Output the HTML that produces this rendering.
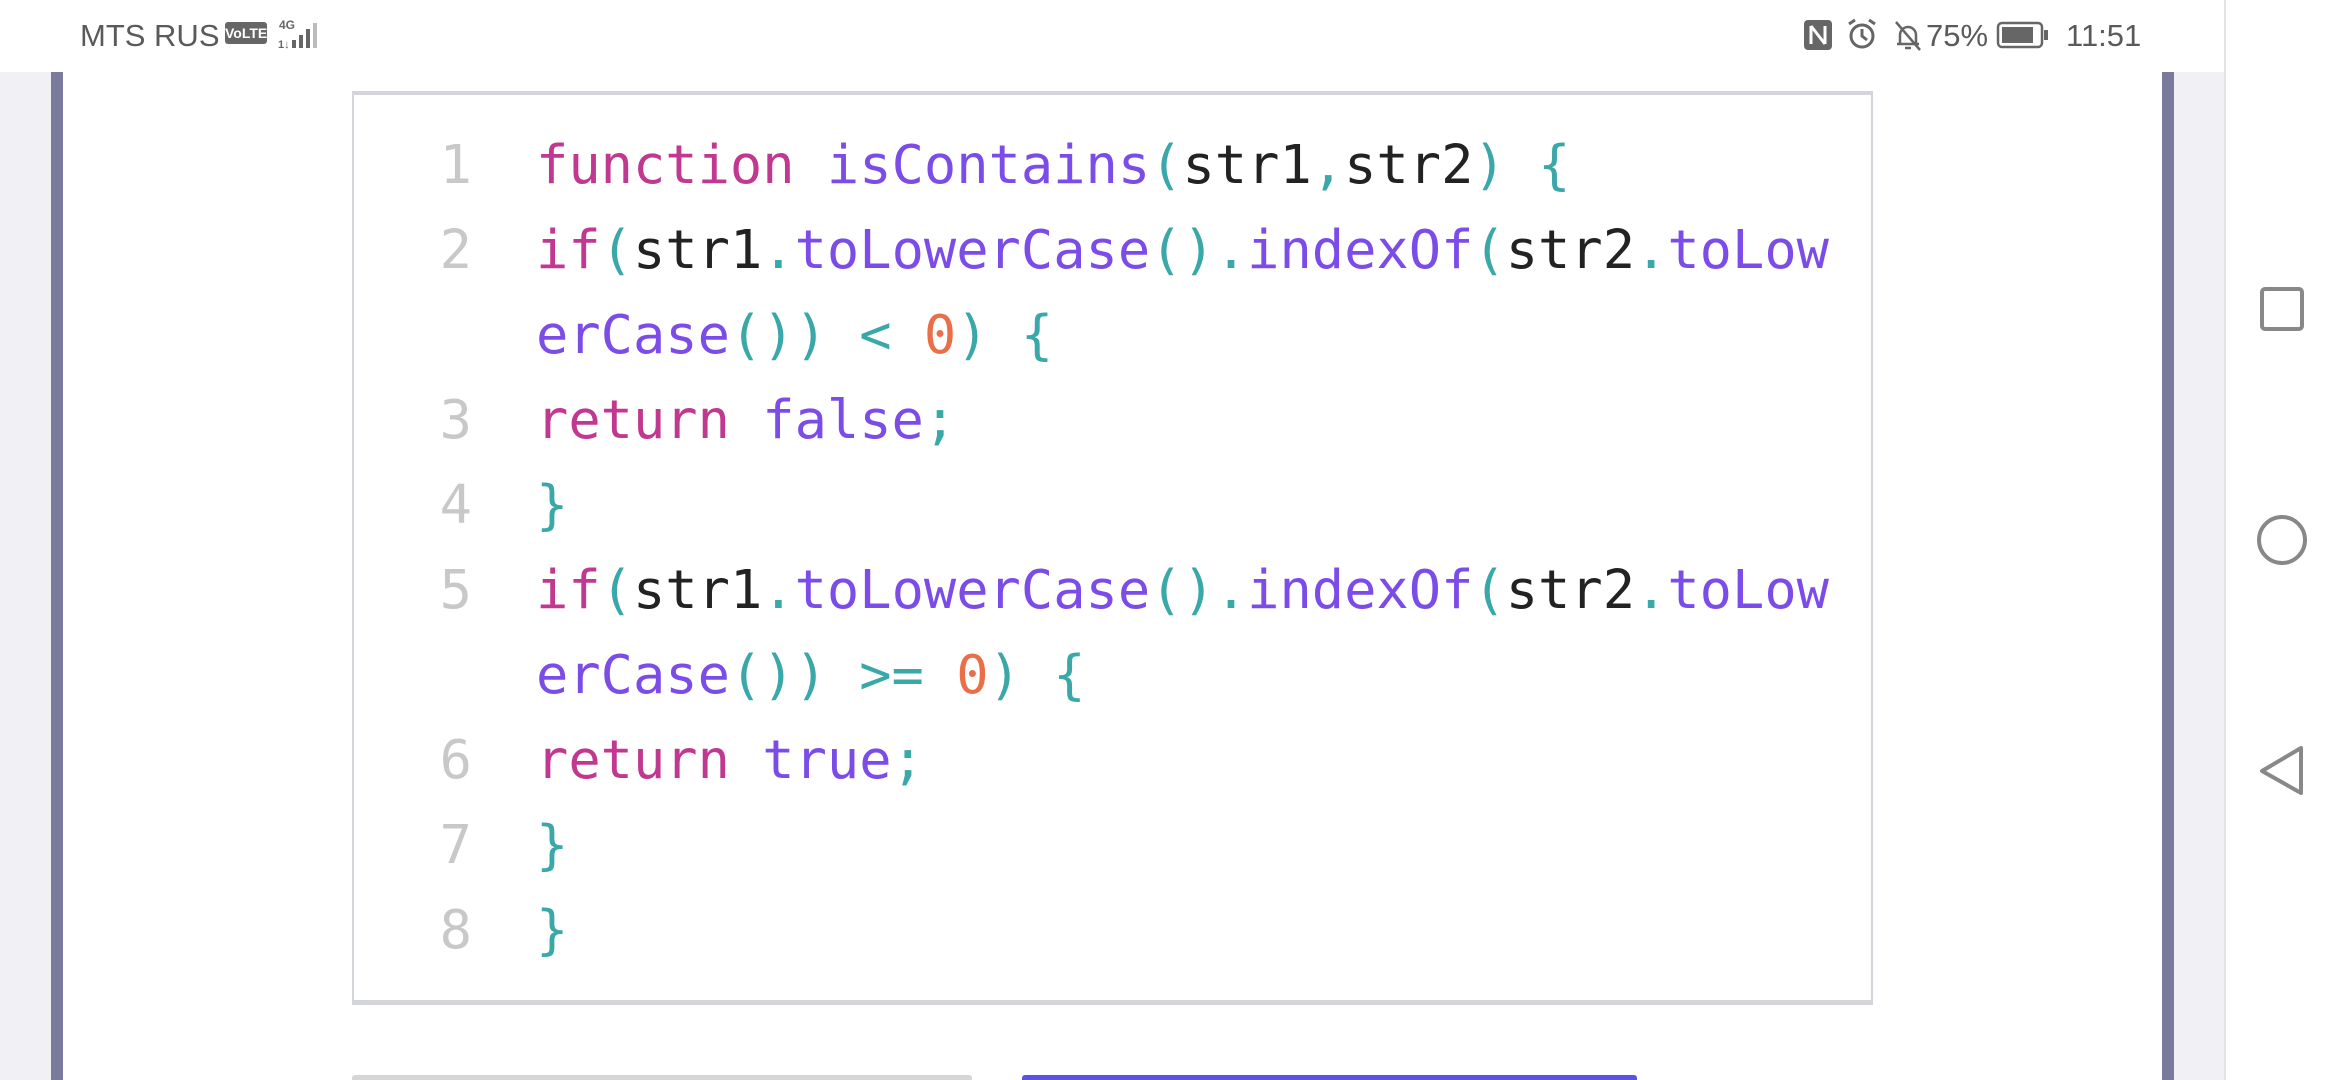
<!DOCTYPE html>
<html><head><meta charset="utf-8"><style>
html,body{margin:0;padding:0;width:2340px;height:1080px;overflow:hidden;background:#f1f0f5;font-family:"Liberation Sans",sans-serif}
.status{position:absolute;left:0;top:0;width:2224px;height:72px;background:#fff}
.nav{position:absolute;left:2224px;top:0;width:116px;height:1080px;background:#fff;border-left:2px solid #e4e4e8;box-sizing:border-box}
.lb{position:absolute;left:51px;top:72px;width:12px;height:1008px;background:#7a7a9c}
.rb{position:absolute;left:2162px;top:72px;width:12px;height:1008px;background:#7a7a9c}
.content{position:absolute;left:63px;top:72px;width:2099px;height:1008px;background:#fff}
.box{position:absolute;left:352px;top:91px;width:1521px;height:914px;box-sizing:border-box;border:2px solid #d4d5da;border-top-width:4px;border-bottom-width:5px;background:#fff}
.ln,.tx{position:absolute;top:122px;font-family:"DejaVu Sans Mono",monospace;font-size:53.7px;line-height:85px;white-space:pre;color:#222;margin:0}
.ln{left:400px;width:72px;text-align:right;color:#c8c8c8}
.tx{left:536px}
.k{color:#c0388f}.f{color:#7b4ce8}.p{color:#3aa7a8}.n{color:#ea6f48}
.st{position:absolute;top:14px;font-size:31px;color:#5a5a5a;line-height:44px}
</style></head><body>
<div class="status"></div>
<div class="st" style="left:80px">MTS RUS</div>
<div style="position:absolute;left:225px;top:22px;width:42px;height:22px;background:#666;border-radius:3px;color:#fff;font-size:14px;font-weight:bold;line-height:22px;text-align:center">VoLTE</div>
<div style="position:absolute;left:279px;top:18px;font-size:12px;color:#666;font-weight:bold">4G</div>
<svg style="position:absolute;left:278px;top:20px" width="52" height="32"><rect x="14" y="20" width="4" height="8" fill="#666"/><rect x="21" y="15" width="4" height="13" fill="#666"/><rect x="28" y="9" width="4" height="19" fill="#666"/><rect x="35" y="3" width="4" height="25" fill="#bbb"/><text x="0" y="28" font-size="11" fill="#666" font-weight="bold">1↓</text></svg>
<svg style="position:absolute;left:1800px;top:18px" width="250" height="36">
<rect x="4" y="2" width="28" height="30" rx="4" fill="#666"/><path d="M11 8v18M25 8v18M11 8l14 18" stroke="#fff" stroke-width="3" fill="none"/>
<circle cx="62" cy="18" r="11" stroke="#666" stroke-width="3" fill="none"/><path d="M62 11v7l5 4M49 6l6-4M75 6l-6-4" stroke="#666" stroke-width="3" fill="none"/>
<path d="M97 26h22M100 26v-9a8 8 0 0 1 16 0v9M96 4l24 28M105 30h6" stroke="#666" stroke-width="2.5" fill="none"/>
</svg>
<div class="st" style="left:1926px">75%</div>
<svg style="position:absolute;left:1996px;top:20px" width="56" height="30"><rect x="2" y="3" width="44" height="24" rx="4" stroke="#666" stroke-width="2.5" fill="none"/><rect x="6" y="7" width="31" height="16" fill="#666"/><rect x="48" y="10" width="4" height="10" fill="#666"/></svg>
<div class="st" style="left:2066px">11:51</div>
<div class="nav"></div>
<svg style="position:absolute;left:2250px;top:280px" width="70" height="530">
<rect x="12" y="9" width="40" height="40" rx="3" stroke="#888" stroke-width="4" fill="none"/>
<circle cx="32" cy="260" r="23" stroke="#888" stroke-width="4" fill="none"/>
<path d="M51 468v45l-39-22z" stroke="#888" stroke-width="4" stroke-linejoin="round" fill="none"/>
</svg>
<div class="content"></div>
<div class="lb"></div><div class="rb"></div>
<div class="box"></div>
<div class="ln">1
2

3
4
5

6
7
8</div>
<div class="tx"><span class="k">function</span> <span class="f">isContains</span><span class="p">(</span>str1<span class="p">,</span>str2<span class="p">)</span> <span class="p">{</span>
<span class="k">if</span><span class="p">(</span>str1<span class="p">.</span><span class="f">toLowerCase</span><span class="p">().</span><span class="f">indexOf</span><span class="p">(</span>str2<span class="p">.</span><span class="f">toLow</span>
<span class="f">erCase</span><span class="p">())</span> <span class="p">&lt;</span> <span class="n">0</span><span class="p">)</span> <span class="p">{</span>
<span class="k">return</span> <span class="f">false</span><span class="p">;</span>
<span class="p">}</span>
<span class="k">if</span><span class="p">(</span>str1<span class="p">.</span><span class="f">toLowerCase</span><span class="p">().</span><span class="f">indexOf</span><span class="p">(</span>str2<span class="p">.</span><span class="f">toLow</span>
<span class="f">erCase</span><span class="p">())</span> <span class="p">&gt;=</span> <span class="n">0</span><span class="p">)</span> <span class="p">{</span>
<span class="k">return</span> <span class="f">true</span><span class="p">;</span>
<span class="p">}</span>
<span class="p">}</span></div>
<div style="position:absolute;left:352px;top:1075px;width:620px;height:5px;background:#d6d6d6;border-radius:3px 3px 0 0"></div>
<div style="position:absolute;left:1022px;top:1075px;width:615px;height:5px;background:#5a52e4;border-radius:3px 3px 0 0"></div>
</body></html>
